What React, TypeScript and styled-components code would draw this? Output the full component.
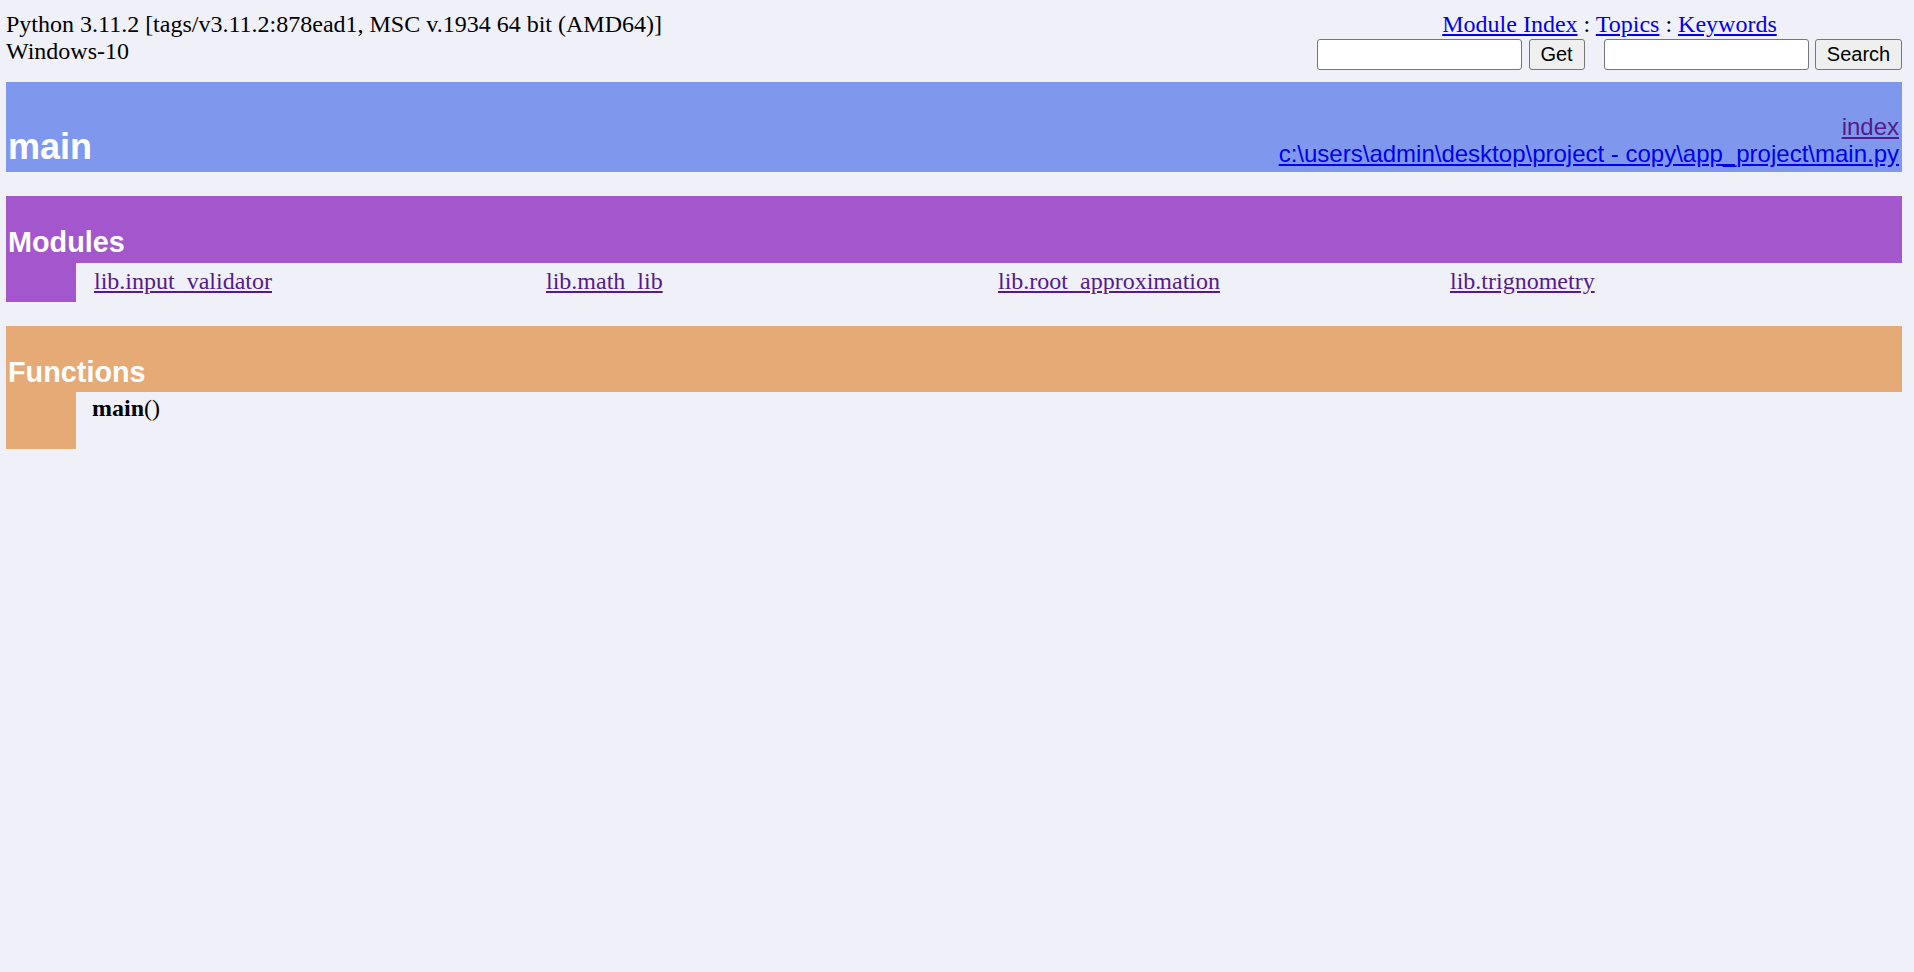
import React from "react";
import styled, { createGlobalStyle } from "styled-components";

const moduleNames = [
  "lib.input_validator",
  "lib.math_lib",
  "lib.root_approximation",
  "lib.trignometry",
];

export default function App() {
  return (
    <>
      <GlobalStyle />
      <Page>
        <TopBar>
          <Version>
            Python 3.11.2 [tags/v3.11.2:878ead1, MSC v.1934 64 bit (AMD64)]
            <br />
            Windows-10
          </Version>
          <Nav>
            <NavLinks>
              <Link href="#">Module Index</Link> : <Link href="#">Topics</Link>{" "}
              : <Link href="#">Keywords</Link>
            </NavLinks>
            <Forms>
              <SearchForm onSubmit={(e) => e.preventDefault()}>
                <TextInput type="text" />
                <SubmitButton type="submit" $width={56}>
                  Get
                </SubmitButton>
              </SearchForm>
              <SearchForm onSubmit={(e) => e.preventDefault()}>
                <TextInput type="text" />
                <SubmitButton type="submit" $width={87}>
                  Search
                </SubmitButton>
              </SearchForm>
            </Forms>
          </Nav>
        </TopBar>

        <Heading>
          <Title>main</Title>
          <Extra>
            <Link href="#" $visited>
              index
            </Link>
            <br />
            <Link href="#">c:\users\admin\desktop\project - copy\app_project\main.py</Link>
          </Extra>
        </Heading>

        <Section>
          <SectionBar $color="#a456cd">Modules</SectionBar>
          <SectionBody>
            <Stripe $color="#a456cd" />
            <ModuleGrid>
              {moduleNames.map((name) => (
                <div key={name}>
                  <Link href="#" $visited>
                    {name}
                  </Link>
                </div>
              ))}
            </ModuleGrid>
          </SectionBody>
        </Section>

        <Section>
          <SectionBar $color="#e6aa76">Functions</SectionBar>
          <SectionBody>
            <Stripe $color="#e6aa76" />
            <FunctionList>
              <dt>
                <strong>main</strong>()
              </dt>
            </FunctionList>
          </SectionBody>
        </Section>
      </Page>
    </>
  );
}

const GlobalStyle = createGlobalStyle`
  html, body {
    margin: 0;
    padding: 0;
    background: #f0f0f8;
  }
  body {
    font-family: "Liberation Serif", "Times New Roman", serif;
    font-size: 24px;
    color: #000;
  }
`;

const Page = styled.div`
  padding: 11px 12px 0 6px;
`;

const TopBar = styled.div`
  display: flex;
  justify-content: space-between;
  align-items: flex-start;
`;

const Version = styled.div`
  line-height: 26.6px;
`;

const Nav = styled.div`
  display: flex;
  flex-direction: column;
`;

const NavLinks = styled.div`
  text-align: center;
  line-height: 26.6px;
`;

const Forms = styled.div`
  display: flex;
  gap: 19px;
  padding: 1px 0;
`;

const SearchForm = styled.form`
  display: flex;
  gap: 6.5px;
  margin: 0;
`;

const TextInput = styled.input`
  box-sizing: border-box;
  width: 205px;
  height: 31px;
  margin: 0;
  padding: 1px 3px;
  border: 1px solid #767676;
  border-radius: 3px;
  background: #fff;
  font-family: "Liberation Sans", Arial, sans-serif;
  font-size: 20px;
`;

const SubmitButton = styled.button<{ $width: number }>`
  box-sizing: border-box;
  width: ${(p) => p.$width}px;
  height: 31px;
  margin: 0;
  padding: 0;
  border: 1px solid #767676;
  border-radius: 3px;
  background: #efefef;
  color: #000;
  font-family: "Liberation Sans", Arial, sans-serif;
  font-size: 20px;
`;

const Link = styled.a<{ $visited?: boolean }>`
  color: ${(p) => (p.$visited ? "#551a8b" : "#0000ee")};
  text-decoration: underline;
`;

const Heading = styled.div`
  margin-top: 11.5px;
  height: 90px;
  box-sizing: border-box;
  display: flex;
  justify-content: space-between;
  align-items: flex-end;
  background: #7f98ed;
  color: #fff;
  font-family: "Liberation Sans", Arial, sans-serif;
`;

const Title = styled.strong`
  font-size: 36px;
  line-height: 1;
  padding: 0 0 7px 2px;
`;

const Extra = styled.div`
  font-size: 24px;
  line-height: 26.6px;
  text-align: right;
  padding: 0 3px 5px 0;
`;

const Section = styled.section`
  margin-top: 24px;
`;

const SectionBar = styled.div<{ $color: string }>`
  height: 66.7px;
  box-sizing: border-box;
  display: flex;
  align-items: flex-end;
  padding: 0 0 6px 2px;
  background: ${(p) => p.$color};
  color: #fff;
  font-family: "Liberation Sans", Arial, sans-serif;
  font-size: 28.8px;
  font-weight: bold;
  line-height: 1;
`;

const SectionBody = styled.div`
  display: flex;
`;

const Stripe = styled.div<{ $color: string }>`
  flex: none;
  width: 70px;
  background: ${(p) => p.$color};
`;

const ModuleGrid = styled.div`
  flex: 1;
  display: grid;
  grid-template-columns: repeat(4, 1fr);
  height: 39px;
  box-sizing: border-box;
  padding: 5px 0 0 18px;
  line-height: 26.6px;
`;

const FunctionList = styled.dl`
  flex: 1;
  margin: 0;
  padding: 2.5px 0 27px 16px;
  line-height: 26.6px;

  dt {
    margin: 0;
  }
`;
